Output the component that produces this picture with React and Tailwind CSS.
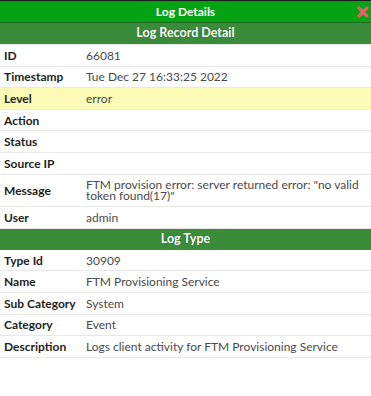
const record = [
  { label: 'ID', value: '66081' },
  { label: 'Timestamp', value: 'Tue Dec 27 16:33:25 2022' },
  { label: 'Level', value: 'error', highlight: true },
  { label: 'Action', value: '' },
  { label: 'Status', value: '' },
  { label: 'Source IP', value: '' },
  { label: 'Message', value: 'FTM provision error: server returned error: "no valid token found(17)"' },
  { label: 'User', value: 'admin' },
];

const logType = [
  { label: 'Type Id', value: '30909' },
  { label: 'Name', value: 'FTM Provisioning Service' },
  { label: 'Sub Category', value: 'System' },
  { label: 'Category', value: 'Event' },
  { label: 'Description', value: 'Logs client activity for FTM Provisioning Service' },
];

function SectionHeader({ children }) {
  return (
    <div className="h-[21px] flex items-center justify-center bg-[#3a8b3a] text-white text-[12.5px] font-bold [text-shadow:0_0_1px_rgba(0,0,0,0.4)]">
      {children}
    </div>
  );
}

function Row({ label, value, highlight }) {
  return (
    <div
      className={`flex items-center border-b border-[#e8e8e8] py-[4.8px] leading-[11px] text-[12px] ${
        highlight ? 'bg-[#fbfbb6]' : 'bg-white'
      }`}
    >
      <div className="w-[86px] shrink-0 pl-[4px] font-bold text-[#1e1e1e]">{label}</div>
      <div className="flex-1 pr-[8px] text-[#4a4a4a] min-h-[11px]">{value}</div>
    </div>
  );
}

export default function App() {
  return (
    <div className="w-[371px] h-[396px] bg-white font-['Lato',sans-serif]">
      <div className="border-t border-[#1b1b1b]">
        <div className="relative h-[22px] flex items-center justify-center bg-[#04a314] text-white text-[12px] font-bold border-b border-[#1f6a1f]">
          Log Details
          <svg
            className="absolute right-[2px] top-[5px] w-[12px] h-[12px] blur-[0.3px]"
            viewBox="0 0 12 12"
          >
            <path d="M2 2 L10 10 M10 2 L2 10" stroke="#e06262" strokeWidth="3.2" strokeLinecap="round" />
          </svg>
        </div>
        <SectionHeader>Log Record Detail</SectionHeader>
        <div className="border-t border-[#e8e8e8]">
          {record.map((r) => (
            <Row key={r.label} {...r} />
          ))}
        </div>
        <SectionHeader>Log Type</SectionHeader>
        <div>
          {logType.map((r) => (
            <Row key={r.label} {...r} />
          ))}
        </div>
      </div>
    </div>
  );
}
